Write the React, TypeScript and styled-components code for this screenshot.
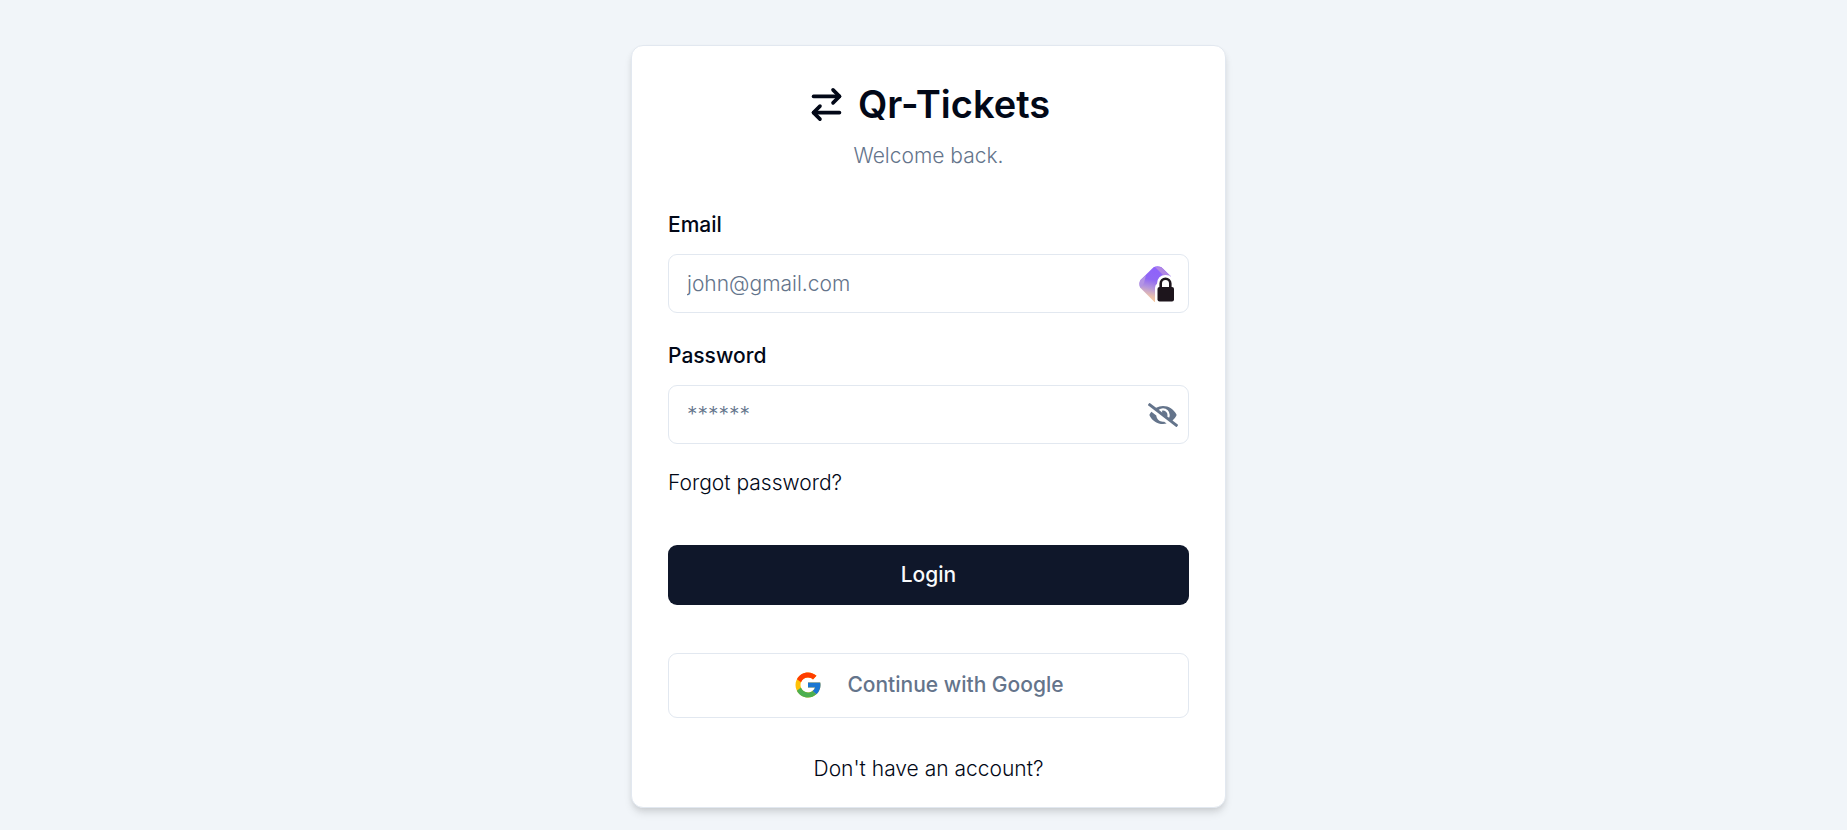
import React from "react";
import styled, { createGlobalStyle, css } from "styled-components";
import { ArrowRightLeft } from "lucide-react";
import { FaEyeSlash } from "react-icons/fa";
import { FcGoogle } from "react-icons/fc";

const GlobalStyle = createGlobalStyle`
  *, *::before, *::after { box-sizing: border-box; }
  body {
    margin: 0;
    background: #f1f5f9;
    color: #020817;
    font-family: Inter, "Liberation Sans", sans-serif;
    font-size: 21px;
    line-height: 30px;
  }
  button, input { font: inherit; color: inherit; }
`;

const Page = styled.main`
  display: flex;
  justify-content: center;
  padding: 45px 20px 22px 30px;
`;

const Card = styled.section`
  width: 100%;
  max-width: 595px;
  padding: 35px 36px 23px;
  background: #ffffff;
  border: 1px solid #e2e8f0;
  border-radius: 12px;
  box-shadow: 0 6px 9px -1px rgba(0, 0, 0, 0.1), 0 3px 6px -2px rgba(0, 0, 0, 0.1);
`;

const Header = styled.header`
  display: flex;
  flex-direction: column;
  align-items: center;
  gap: 14px;
`;

const Brand = styled.h1`
  display: flex;
  align-items: center;
  gap: 12px;
  margin: 0;
  font-size: 38px;
  font-weight: 600;
  line-height: 46px;
`;

const Subtitle = styled.p`
  margin: 0;
  color: #64748b;
  font-weight: 300;
`;

const Form = styled.form`
  display: flex;
  flex-direction: column;
  margin-top: 39px;
`;

const Fields = styled.div`
  display: grid;
  gap: 28px;
`;

const Field = styled.div`
  display: grid;
  gap: 14px;
`;

const Label = styled.label`
  font-weight: 500;
`;

const InputShell = styled.div<{ $iconGap: number }>`
  display: flex;
  align-items: center;
  height: 59px;
  padding: 0 ${(p) => p.$iconGap}px 0 18px;
  border: 1px solid #e2e8f0;
  border-radius: 9px;
`;

const Input = styled.input`
  flex: 1;
  min-width: 0;
  padding: 0;
  border: 0;
  outline: 0;
  background: transparent;
  font-weight: 300;
  &::placeholder { color: #64748b; opacity: 1; }
`;

const IconButton = styled.button`
  display: flex;
  padding: 0;
  border: 0;
  background: transparent;
  color: #64748b;
  cursor: pointer;
`;

const TextLink = styled.a<{ $centered?: boolean }>`
  align-self: ${(p) => (p.$centered ? "center" : "flex-start")};
  color: #020817;
  font-weight: 300;
  text-decoration: none;
`;

const Links = styled.div`
  display: flex;
  flex-direction: column;
  margin: 24px 0 47px;
`;

const Footer = styled.footer`
  display: flex;
  flex-direction: column;
  margin-top: 36px;
`;

const Button = styled.button<{ $outline?: boolean }>`
  display: flex;
  align-items: center;
  justify-content: center;
  width: 100%;
  height: 60px;
  border: 0;
  border-radius: 9px;
  background: #0f172a;
  color: #f8fafc;
  font-weight: 500;
  cursor: pointer;
  ${(p) =>
    p.$outline &&
    css`
      gap: 24px;
      height: 65px;
      margin-top: 48px;
      padding-bottom: 2px;
      border: 1px solid #e2e8f0;
      background: #ffffff;
      color: #64748b;
    `}
`;

function VaultIcon() {
  return (
    <svg width="38" height="38" viewBox="0 0 38 38" aria-hidden="true">
      <defs>
        <linearGradient id="vault" x1="0.6" y1="0" x2="0.4" y2="1">
          <stop offset="0.1" stopColor="#8f62fb" />
          <stop offset="0.4" stopColor="#9068f4" />
          <stop offset="0.62" stopColor="#b394dd" />
          <stop offset="0.85" stopColor="#e8bfae" />
          <stop offset="1" stopColor="#f9ca9c" />
        </linearGradient>
      </defs>
      <path
        d="M15.5 2.3Q19.5 0.2 23.5 2.3L33 11.5V37H16.5L2.5 23Q0.2 19 2.5 15Z"
        fill="url(#vault)"
      />
      <path d="M17 2L23.5 2.3L33 11.5L27 12Z" fill="#b187e4" />
      <path d="M8 10L2.5 15Q0.2 19 2.5 23L6 18Z" fill="#b394e4" />
      <path
        d="M17 38V23Q17 20 19 18.7Q19.5 10 27.5 10Q36 10 36 19Q38 21 38 24V38Z"
        fill="#ffffff"
      />
      <path d="M22.7 23V18.5A4.8 4.8 0 0 1 32.3 18.5V23" fill="none" stroke="#1d151c" strokeWidth="2.6" />
      <rect x="19.5" y="22" width="16.5" height="14.5" rx="2" fill="#1d151c" />
    </svg>
  );
}

export default function App() {
  return (
    <>
      <GlobalStyle />
      <Page>
        <Card>
          <Header>
            <Brand>
              <ArrowRightLeft size={39} strokeWidth={2.2} aria-hidden="true" />
              Qr-Tickets
            </Brand>
            <Subtitle>Welcome back.</Subtitle>
          </Header>
          <Form onSubmit={(e) => e.preventDefault()}>
            <Fields>
              <Field>
                <Label htmlFor="email">Email</Label>
                <InputShell $iconGap={12}>
                  <Input id="email" type="email" placeholder="john@gmail.com" />
                  <VaultIcon />
                </InputShell>
              </Field>
              <Field>
                <Label htmlFor="password">Password</Label>
                <InputShell $iconGap={10}>
                  <Input id="password" type="password" placeholder="******" />
                  <IconButton type="button" aria-label="Show password">
                    <FaEyeSlash size={30} />
                  </IconButton>
                </InputShell>
              </Field>
            </Fields>
            <Links>
              <TextLink href="#forgot">Forgot password?</TextLink>
            </Links>
            <Button type="submit">Login</Button>
          </Form>
          <Button type="button" $outline>
            <FcGoogle size={30} aria-hidden="true" />
            Continue with Google
          </Button>
          <Footer>
            <TextLink href="#register" $centered>
              Don't have an account?
            </TextLink>
          </Footer>
        </Card>
      </Page>
    </>
  );
}
